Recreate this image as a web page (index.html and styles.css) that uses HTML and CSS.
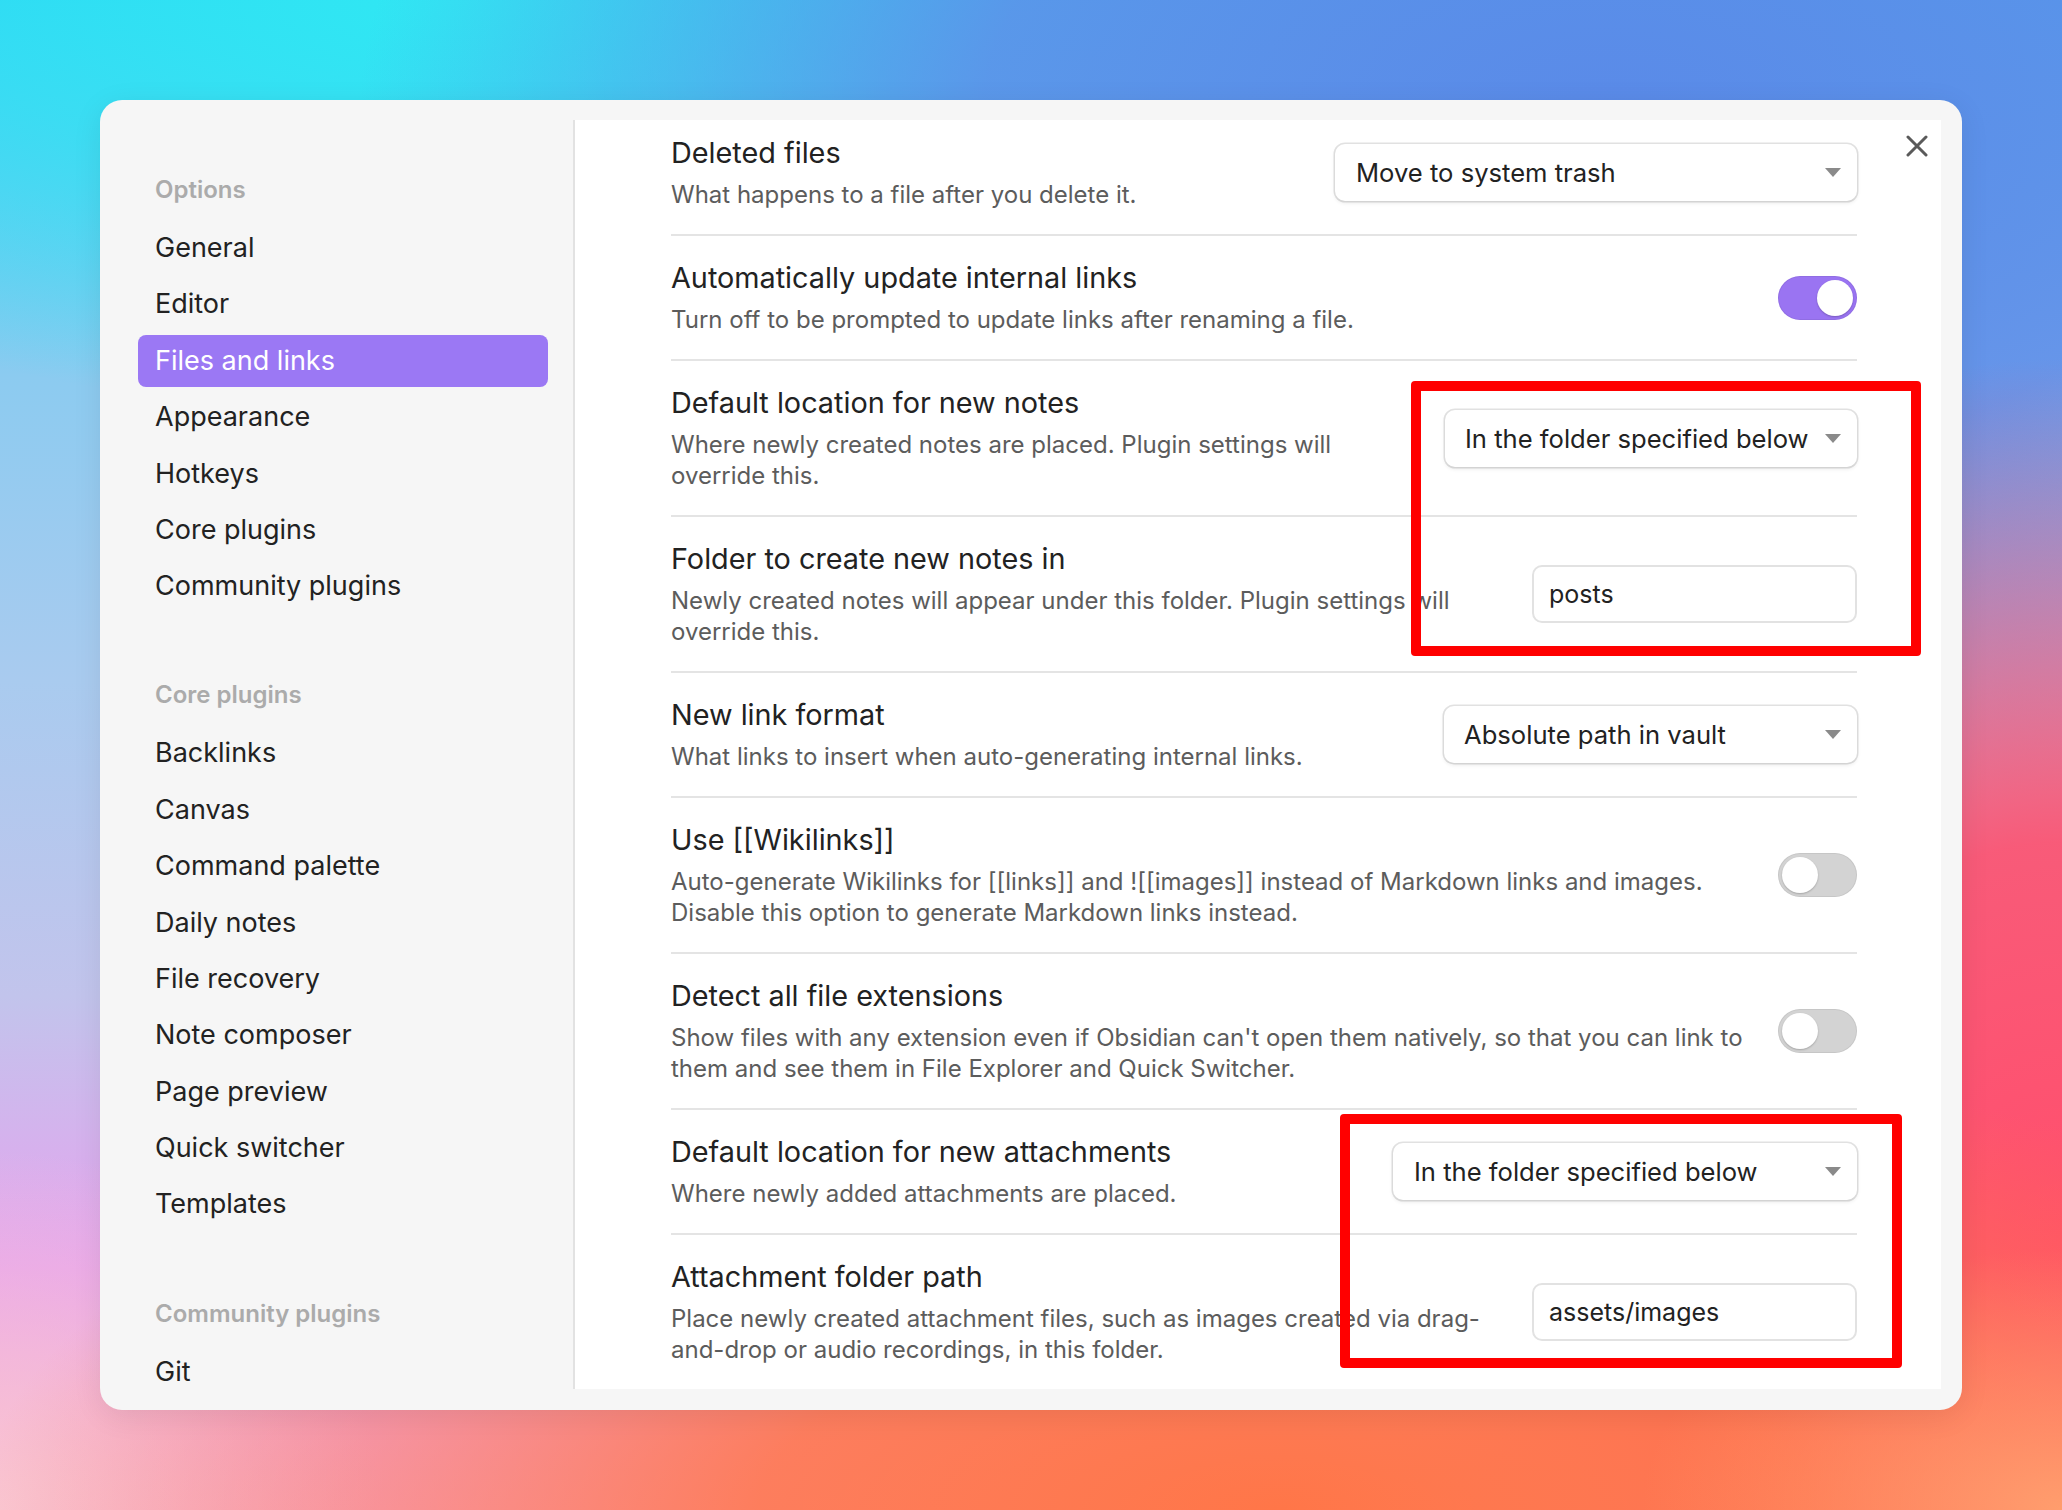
FILE: index.html
```html
<!DOCTYPE html>
<html lang="en">
<head>
<meta charset="utf-8">
<title>Settings – Files and links</title>
<link rel="stylesheet" href="styles.css">
</head>
<body>
<div class="stage">
  <div class="modal">
    <aside class="sidebar">
      <div class="nav-group">
        <div class="nav-header">Options</div>
        <div class="nav-item">General</div>
        <div class="nav-item">Editor</div>
        <div class="nav-item active">Files and links</div>
        <div class="nav-item">Appearance</div>
        <div class="nav-item">Hotkeys</div>
        <div class="nav-item">Core plugins</div>
        <div class="nav-item">Community plugins</div>
      </div>
      <div class="nav-group">
        <div class="nav-header">Core plugins</div>
        <div class="nav-item">Backlinks</div>
        <div class="nav-item">Canvas</div>
        <div class="nav-item">Command palette</div>
        <div class="nav-item">Daily notes</div>
        <div class="nav-item">File recovery</div>
        <div class="nav-item">Note composer</div>
        <div class="nav-item">Page preview</div>
        <div class="nav-item">Quick switcher</div>
        <div class="nav-item">Templates</div>
      </div>
      <div class="nav-group nav-group-last">
        <div class="nav-header">Community plugins</div>
        <div class="nav-item">Git</div>
      </div>
    </aside>

    <main class="panel">
      <div class="setting first">
        <div class="info">
          <div class="name">Deleted files</div>
          <div class="desc">What happens to a file after you delete it.</div>
        </div>
        <div class="dropdown dd-trash"><span>Move to system trash</span><i class="caret"></i></div>
      </div>

      <div class="setting">
        <div class="info">
          <div class="name">Automatically update internal links</div>
          <div class="desc">Turn off to be prompted to update links after renaming a file.</div>
        </div>
        <div class="toggle on"></div>
      </div>

      <div class="setting">
        <div class="info">
          <div class="name">Default location for new notes</div>
          <div class="desc">Where newly created notes are placed. Plugin settings will override this.</div>
        </div>
        <div class="dropdown dd-notes"><span>In the folder specified below</span><i class="caret"></i></div>
      </div>

      <div class="setting">
        <div class="info">
          <div class="name">Folder to create new notes in</div>
          <div class="desc">Newly created notes will appear under this folder. Plugin settings will override this.</div>
        </div>
        <input class="text-input" type="text" value="posts">
      </div>

      <div class="setting">
        <div class="info">
          <div class="name">New link format</div>
          <div class="desc">What links to insert when auto-generating internal links.</div>
        </div>
        <div class="dropdown dd-link"><span>Absolute path in vault</span><i class="caret"></i></div>
      </div>

      <div class="setting">
        <div class="info">
          <div class="name">Use [[Wikilinks]]</div>
          <div class="desc">Auto-generate Wikilinks for [[links]] and ![[images]] instead of Markdown links and images. Disable this option to generate Markdown links instead.</div>
        </div>
        <div class="toggle"></div>
      </div>

      <div class="setting">
        <div class="info">
          <div class="name">Detect all file extensions</div>
          <div class="desc">Show files with any extension even if Obsidian can't open them natively, so that you can link to them and see them in File Explorer and Quick Switcher.</div>
        </div>
        <div class="toggle"></div>
      </div>

      <div class="setting">
        <div class="info">
          <div class="name">Default location for new attachments</div>
          <div class="desc">Where newly added attachments are placed.</div>
        </div>
        <div class="dropdown dd-attach"><span>In the folder specified below</span><i class="caret"></i></div>
      </div>

      <div class="setting">
        <div class="info">
          <div class="name">Attachment folder path</div>
          <div class="desc">Place newly created attachment files, such as images created via drag-and-drop or audio recordings, in this folder.</div>
        </div>
        <input class="text-input" type="text" value="assets/images">
      </div>
    </main>

    <button class="close" aria-label="Close">
      <svg width="22" height="22" viewBox="0 0 22 22"><path d="M2 2 L20 20 M20 2 L2 20" stroke="#5a5a5a" stroke-width="3" stroke-linecap="round" fill="none"/></svg>
    </button>
  </div>

  <div class="mark mark-notes"></div>
  <div class="mark mark-attach"></div>
</div>
</body>
</html>
```

FILE: styles.css
```css
* { box-sizing: border-box; }

html, body {
  margin: 0;
  padding: 0;
}

body {
  font-family: Inter, "Noto Sans", "Liberation Sans", sans-serif;
  color: #222222;
  overflow: hidden;
}

.stage {
  position: relative;
  width: 2062px;
  height: 1510px;
  padding: 100px;
  background:
    radial-gradient(ellipse 420px 260px at 100% 100%, rgba(255,160,110,0.95) 0%, rgba(255,160,110,0) 100%),
    radial-gradient(ellipse 1300px 480px at 62% 100%, #ff7648 0%, rgba(255,118,72,0.85) 40%, rgba(255,118,72,0) 100%),
    radial-gradient(ellipse 380px 360px at 0% 100%, rgba(250,200,210,0.95) 0%, rgba(250,200,210,0) 100%),
    radial-gradient(ellipse 700px 880px at 100% 82%, #ff4f6c 0%, rgba(255,79,108,0.9) 45%, rgba(255,79,108,0) 100%),
    radial-gradient(ellipse 1250px 720px at 78% 8%, #5a8ae8 0%, rgba(96,140,232,0.85) 50%, rgba(96,140,232,0) 100%),
    radial-gradient(ellipse 950px 420px at 22% 0%, #30e8f3 0%, rgba(48,232,243,0.6) 50%, rgba(48,232,243,0) 100%),
    linear-gradient(180deg, #2fcbf4 0%, #8ccbf0 25%, #a9cbef 45%, #c2c4ec 66%, #e6a2ee 84%, #f4a8d4 100%);
}

.modal {
  position: relative;
  display: flex;
  width: 1862px;
  height: 1310px;
  background: #f6f6f6;
  border-radius: 22px;
  overflow: hidden;
  box-shadow: 0 6px 30px rgba(0,0,0,0.08);
}

/* Sidebar */
.sidebar {
  width: 473px;
  flex: 0 0 473px;
  padding: 74px 25px 0 38px;
  overflow: hidden;
}

.nav-group + .nav-group {
  margin-top: 67px;
}

.nav-group.nav-group-last {
  margin-top: 68px;
}

.nav-header {
  padding-left: 17px;
  font-size: 24px;
  line-height: 32px;
  font-weight: 600;
  color: #ababab;
  margin-bottom: 16px;
}

.nav-item {
  height: 52px;
  line-height: 52px;
  padding: 0 17px;
  border-radius: 8px;
  margin-bottom: 4.4px;
  font-size: 27px;
  color: #222222;
  white-space: nowrap;
}

.nav-item.active {
  background: #9b78f4;
  color: #ffffff;
}

/* Content panel */
.panel {
  flex: 1;
  margin: 20px 21px 21px 0;
  background: #ffffff;
  border-left: 2px solid #e2e2e2;
  padding: 0 84px 0 96px;
  overflow: hidden;
}

.setting {
  display: flex;
  align-items: center;
  padding: 24px 0;
  border-top: 2px solid #e4e4e4;
}

.setting.first {
  border-top: none;
  padding-top: 15px;
}

.info {
  flex: 1;
  min-width: 0;
  margin-right: 20px;
}

.name {
  font-size: 28.8px;
  line-height: 36px;
  color: #222222;
}

.desc {
  margin-top: 8px;
  font-size: 24px;
  line-height: 31px;
  color: #5c5c5c;
}

/* Dropdown */
.dropdown {
  flex: 0 0 auto;
  display: flex;
  align-items: center;
  justify-content: space-between;
  height: 57px;
  padding: 0 16px 0 21px;
  background: #ffffff;
  border-radius: 10px;
  box-shadow: 0 0 0 1.5px rgba(0,0,0,0.11), 0 2px 4px rgba(0,0,0,0.09);
  font-size: 25.6px;
  color: #222222;
  white-space: nowrap;
}

.dd-trash { width: 522px; }
.dd-notes { width: 412px; padding-left: 20px; }
.dd-link { width: 413px; padding-left: 20px; }
.dd-attach { width: 464px; }

.caret {
  width: 0;
  height: 0;
  border-left: 8px solid transparent;
  border-right: 8px solid transparent;
  border-top: 9px solid #8a8a8a;
  margin-left: 12px;
}

/* Text input */
.text-input {
  flex: 0 0 auto;
  width: 325px;
  height: 58px;
  padding: 0 15px;
  border: 2px solid #e2e2e2;
  border-radius: 10px;
  background: #ffffff;
  font-family: Inter, "Noto Sans", "Liberation Sans", sans-serif;
  font-size: 25px;
  color: #222222;
  outline: none;
}

/* Toggle */
.toggle {
  flex: 0 0 auto;
  position: relative;
  width: 79px;
  height: 44px;
  border-radius: 22px;
  background: #d3d3d3;
  box-shadow: inset 0 0 0 1px rgba(0,0,0,0.06);
}

.toggle::after {
  content: "";
  position: absolute;
  top: 4px;
  left: 4px;
  width: 36px;
  height: 36px;
  border-radius: 50%;
  background: #ffffff;
  box-shadow: 0 1px 2px rgba(0,0,0,0.22);
}

.toggle.on {
  background: #9a74f2;
}

.toggle.on::after {
  left: 39px;
}

/* Close button */
.close {
  position: absolute;
  top: 35px;
  right: 34px;
  width: 22px;
  height: 22px;
  padding: 0;
  border: none;
  background: transparent;
}

.close svg {
  display: block;
}

/* Annotation rectangles */
.mark {
  position: absolute;
  border: 10px solid #ff0000;
  border-radius: 4px;
}

.mark-notes {
  left: 1411px;
  top: 381px;
  width: 510px;
  height: 275px;
}

.mark-attach {
  left: 1340px;
  top: 1114px;
  width: 562px;
  height: 254px;
}
```
